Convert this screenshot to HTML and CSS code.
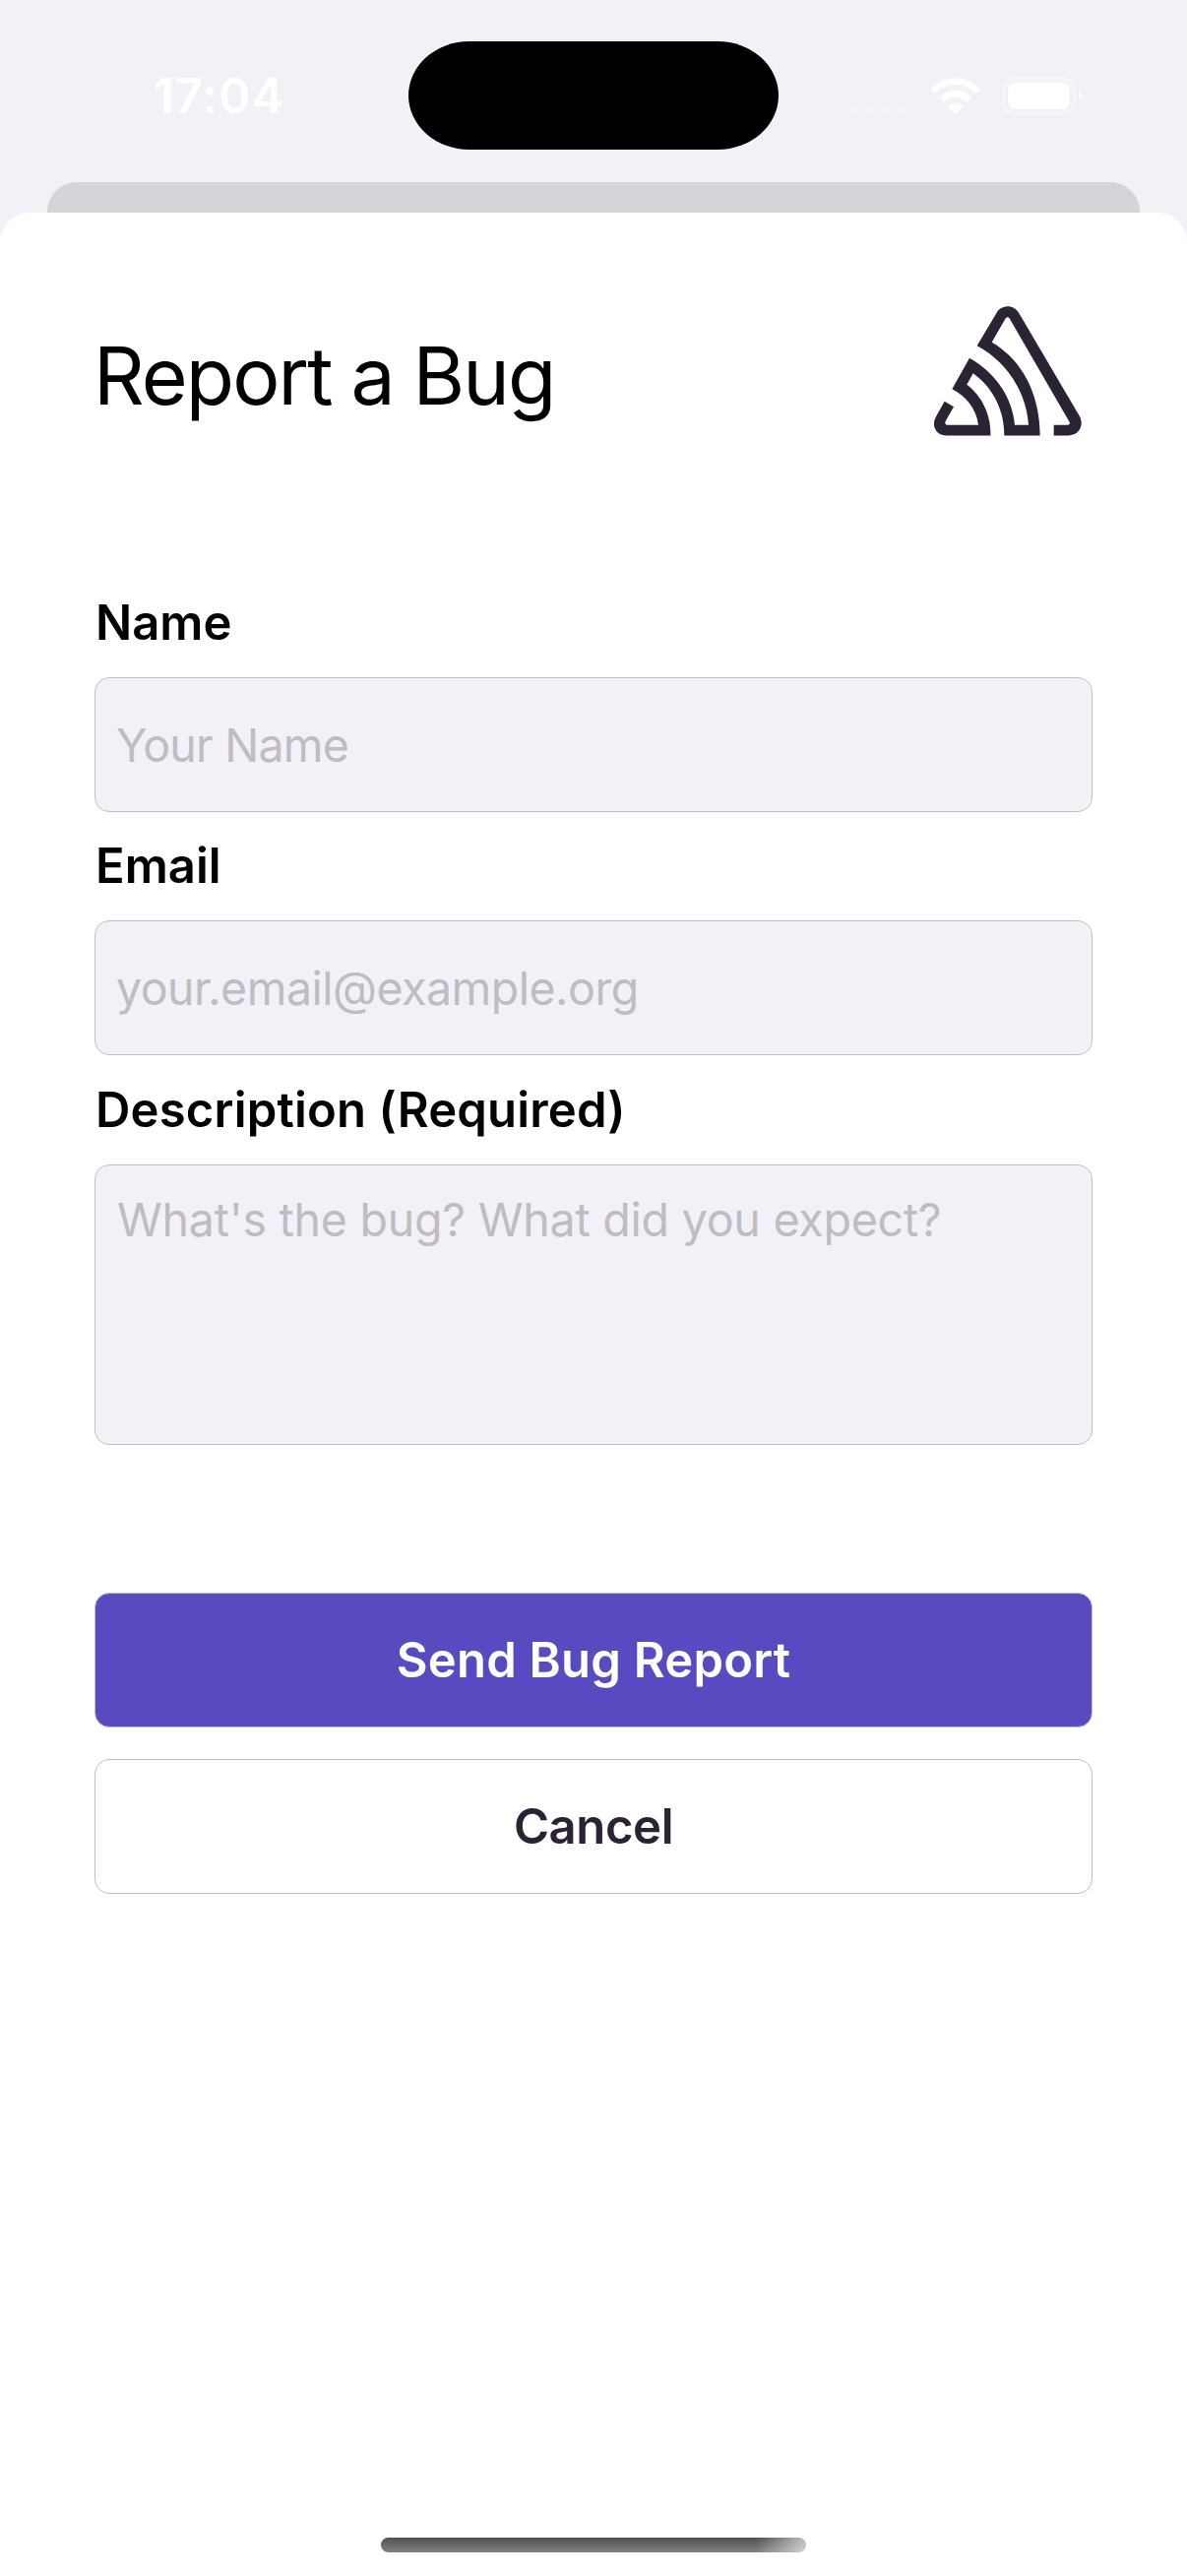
FILE: index.html
```
<!DOCTYPE html>
<html lang="en">
<head>
<meta charset="utf-8">
<title>Report a Bug</title>
<link rel="stylesheet" href="styles.css">
</head>
<body>
<div class="screen">
  <header class="status-bar">
    <span class="time">17:04</span>
    <span class="island"></span>
    <svg class="status-icons" viewBox="860 70 246 54" fill="#fff">
      <g fill-opacity=".18"><circle cx="870" cy="111" r="5.500"/><circle cx="886" cy="111" r="5.500"/><circle cx="902" cy="111" r="5.500"/><circle cx="918" cy="111" r="5.500"/></g>
      <path d="M945.900 90.500C960 75.500 981.500 75.500 995.500 90.500Q996 91 995.400 91.700L992 94.200Q991.300 94.500 990.700 94C979 83.500 962.500 83.500 950.700 94Q950 94.500 949.500 94L946 91.500Q945.400 91 945.900 90.500Z"/>
      <path d="M954.500 98.500C964.500 89.300 977 89.300 987 98.500L983 103.500Q982.500 104 982 103.500C975 97.600 966.500 97.600 959.500 103.500Q959 104 958.500 103.500Z"/>
      <path d="M963 107.500C968 103.700 973.500 103.700 978.500 107.500L971.500 115.500Q970.700 116.300 970 115.500Z"/>
      <rect x="1019.500" y="79.500" width="72" height="36" rx="11.500" fill="none" stroke="#fff" stroke-opacity=".35" stroke-width="3"/>
      <rect x="1024" y="84" width="63" height="27" rx="8"/>
      <path d="M1096.200 91.500Q1100 94 1100 97.500T1096.200 103.500Z" fill-opacity=".5"/>
    </svg>
  </header>
  <div class="back-card"></div>
  <main class="sheet">
    <div class="heading">
      <h1>Report a Bug</h1>
      <svg class="logo" viewBox="88 64 450 395" fill="#2b2233"><path d="M219 184L278 85C294 57 331 57 347 85L531 398C547 426 530 458 498 458H453V426H494C501 426 504 421 500 415L318 101C315 96 309 96 306 101L264 174C355 226 411 330 411 458H302C302 380 268 312 207 268L188 303C236 339 263 400 260 458H127C94 458 78 428 94 400L120 354L148 370L124 412C119 421 123 426 130 426H223C218 378 186 338 143 316L196 222C274 266 327 341 334 426H376C370 322 304 228 219 184Z"/></svg>
    </div>
    <form class="form">
      <label class="label" for="name">Name</label>
      <input class="field name-field" id="name" placeholder="Your Name">
      <label class="label" for="email">Email</label>
      <input class="field email-field" id="email" placeholder="your.email@example.org">
      <label class="label label-wide" for="description">Description (Required)</label>
      <textarea class="field area" id="description" placeholder="What's the bug? What did you expect?"></textarea>
      <button class="button primary" type="button">Send Bug Report</button>
      <button class="button secondary" type="button">Cancel</button>
    </form>
    <div class="home-indicator"></div>
  </main>
</div>
</body>
</html>
```
FILE: styles.css
```
* { box-sizing: border-box; }
body { margin: 0; font-family: Inter, "Liberation Sans", sans-serif; background: #f2f1f7; }
.screen { width: 1206px; height: 2617px; display: flex; flex-direction: column; overflow: hidden; background: #f2f1f7; }

.status-bar { height: 185px; flex: none; position: relative; display: flex; justify-content: space-between; padding: 70px 100px 0 156px; }
.time { font-size: 49px; font-weight: 600; line-height: 56px; letter-spacing: 1.07px; color: #fff; }
.island { position: absolute; left: 415px; top: 42px; width: 376px; height: 110px; border-radius: 62px / 55px; background: #000; }
.status-icons { width: 246px; height: 54px; }

.back-card { flex: none; height: 31px; margin: 0 48px; border-radius: 30px 30px 0 0; background: #d5d4d9; }
.sheet { flex: 1; display: flex; flex-direction: column; background: #fff; border-radius: 30px 30px 0 0; padding: 95px 96px 24px; }

.heading { display: flex; justify-content: space-between; height: 134px; padding-right: 11px; }
h1 { margin: 21px 0 0 -1px; font-size: 80.500px; font-weight: 400; line-height: 100px; letter-spacing: -1.900px; word-spacing: -.900px; color: #000; }
.logo { width: 150px; height: 132px; }

.form { display: flex; flex-direction: column; margin-top: 158px; }
.label { font-size: 49px; font-weight: 600; line-height: 60px; color: #000; margin: 0 0 25px 1px; }
.label-wide { letter-spacing: .18px; }
.field { font: 400 46.500px/56px Inter, "Liberation Sans", sans-serif; height: 137px; border: 1px solid #c0c0c3; border-radius: 15px; background: #f2f1f7; padding: 0 21px; margin: 0 0 25.333px; }
.field::placeholder { color: #bebdc2; opacity: 1; }
.name-field { letter-spacing: -.76px; }
.email-field { letter-spacing: -.5px; }
.area { height: 285px; resize: none; padding: 27px 22px 0; margin-bottom: 150px; letter-spacing: -.23px; }

.button { height: 137px; padding: 2px 0 0; font: 600 49px/60px Inter, "Liberation Sans", sans-serif; border: 1px solid #c0c0c3; border-radius: 15px; }
.primary { background: #584ac0; color: #fff; letter-spacing: .21px; margin-bottom: 32px; }
.secondary { background: #fff; color: #2b2233; letter-spacing: -.4px; }

.home-indicator {
  width: 432px; height: 15px; border-radius: 8px; margin: auto auto 0;
  background: linear-gradient(100deg, transparent 88%, rgba(255, 255, 255, .6) 99%), linear-gradient(#505050, #808080);
}
```
